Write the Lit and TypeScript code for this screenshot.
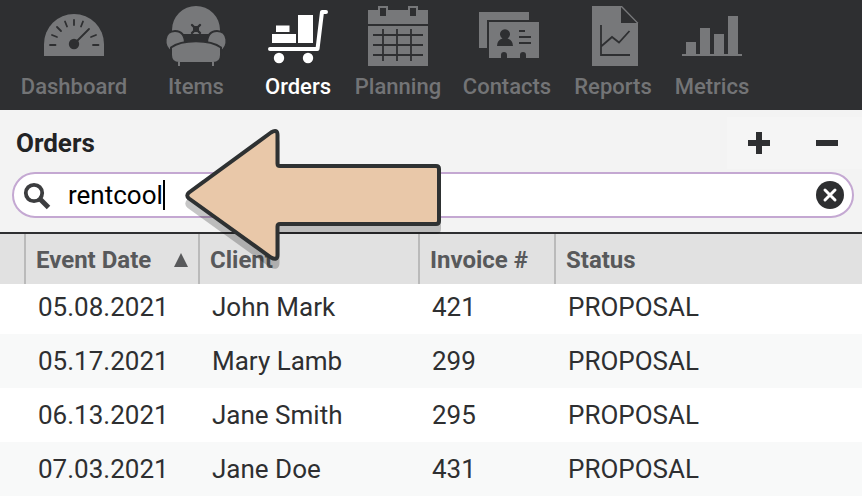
import { LitElement, html, css, svg } from "lit";
import { customElement, property, state } from "lit/decorators.js";
import { classMap } from "lit/directives/class-map.js";

const DARK = "#2e2f31";

const icons: Record<string, unknown> = {
  Dashboard: svg`
    <path fill="currentColor" d="M0 50V38a30 30 0 0 1 60 0v12z"/>
    <circle cx="30" cy="38" r="5.2" fill="${DARK}"/>
    <path fill="none" stroke="${DARK}" stroke-width="1.8" stroke-linecap="round"
      d="M30 38L45 23M6 39h5.500M49 39h5.500M8 29l5 2M13 21l4 4M21 15.500l2 5M30 14v5M39 15.500l-2 5M52 29l-5 2"/>`,
  Items: svg`
    <path fill="currentColor" d="M6 24a24 24 0 0 1 48 0v4H6z"/>
    <path fill="none" stroke="${DARK}" stroke-width="2.400" stroke-linecap="round" d="M26 19l8 8M34 19l-8 8"/>
    <rect x="27" y="20" width="6" height="6" rx="1" fill="${DARK}"/>
    <path fill="currentColor" stroke="${DARK}" stroke-width="2" d="M6 46C-4 40-2 25 9 25c7 0 10 5 10 13v8z"/>
    <path fill="currentColor" stroke="${DARK}" stroke-width="2" d="M54 46c10-6 8-21-3-21-7 0-10 5-10 13v8z"/>
    <path fill="currentColor" stroke="${DARK}" stroke-width="2" d="M5 41.500C16 33 44 33 55 41.500V49q0 8-8 8H13q-8 0-8-8z"/>
    <path fill="currentColor" d="M12 56h2v4h-2zM46 56h2v4h-2z"/>`,
  Orders: svg`
    <path fill="none" stroke="currentColor" stroke-width="4" stroke-linecap="round" stroke-linejoin="round" d="M2 43h47.500L54 6h4"/>
    <path fill="currentColor" d="M4 28h24v9H4zM8 19.500h13.500v6.500H8zM30 9h15v28H30z"/>
    <circle cx="11" cy="52" r="5.200" fill="currentColor"/>
    <circle cx="40" cy="52" r="5.200" fill="currentColor"/>`,
  Planning: svg`
    <path fill="currentColor" d="M0 4h10V0h10v4h20V0h10v4h10v14H0zM0 20h60v40H0z"/>
    <path fill="${DARK}" d="M12 2h6v8h-6zM42 2h6v8h-6z"/>
    <path fill="none" stroke="${DARK}" stroke-width="1.800" d="M5 29h50M5 39h50M5 49h50M15 23v32M29 23v32M43 23v32"/>`,
  Contacts: svg`
    <path fill="currentColor" d="M2 6h50v8H10v28H2z"/>
    <path fill="currentColor" d="M12 16h50v36H49v-3a3 3 0 0 0-6 0v3H30v-3a3 3 0 0 0-6 0v3H12z"/>
    <path fill="${DARK}" d="M20 40q0-6 5.500-7.500a5 5 0 1 1 5 0Q36 34 36 40z"/>
    <path fill="none" stroke="${DARK}" stroke-width="2" d="M42 25h6M42 31h12M42 37h12"/>`,
  Reports: svg`
    <path fill="currentColor" d="M9 0h30l16 16.500V60H9z"/>
    <path fill="${DARK}" d="M38 1v16h16z"/>
    <path fill="none" stroke="currentColor" stroke-width="1" d="M38.500 .5L54.500 17"/>
    <path fill="none" stroke="${DARK}" stroke-width="1.800" d="M18 19v30h29M18 40.500L29 31l7 5.500L46.500 25"/>`,
  Metrics: svg`
    <path fill="currentColor" d="M0 48h60v2H0zM4 36h10v13H4zM18 22h10v27H18zM32 28h10v21H32zM46 10h10v39H46z"/>`,
};

@customElement("nav-item")
class NavItem extends LitElement {
  @property() label = "";
  @property({ type: Boolean }) active = false;

  static styles = css`
    :host { display: block; }
    .item {
      display: flex;
      flex-direction: column;
      align-items: center;
      gap: 8px;
      color: #737476;
      text-decoration: none;
      font: 500 22px/26px Roboto, "Liberation Sans", sans-serif;
      white-space: nowrap;
    }
    .icon { display: block; width: 60px; height: 60px; overflow: visible; color: #77787a; }
    .active, .active .icon { color: #fff; }
  `;

  render() {
    return html`<a href="#" class=${classMap({ item: true, active: this.active })}
      aria-current=${this.active ? "page" : "false"}>
      <svg class="icon" viewBox="0 0 60 60" aria-hidden="true">${icons[this.label]}</svg>
      <span>${this.label}</span>
    </a>`;
  }
}

const orders = [
  ["05.08.2021", "John Mark", "421", "PROPOSAL"],
  ["05.17.2021", "Mary Lamb", "299", "PROPOSAL"],
  ["06.13.2021", "Jane Smith", "295", "PROPOSAL"],
  ["07.03.2021", "Jane Doe", "431", "PROPOSAL"],
];

@customElement("app-root")
class AppRoot extends LitElement {
  @state() private query = "rentcool";

  static styles = css`
    :host {
      display: block;
      position: relative;
      background: #fff;
      color: #2e2f31;
      font-family: Roboto, "Liberation Sans", sans-serif;
    }
    .nav {
      display: grid;
      grid-template-columns: 130px 114px 90px 110px 108px 104px 94px;
      padding: 6px 9px 10px;
      background: #2e2f31;
    }
    .panel { background: #f3f3f3; border-bottom: 2px solid #2e2f31; padding: 7px 8px 14px 12px; }
    .head { display: flex; align-items: center; justify-content: space-between; padding-left: 4px; margin-bottom: 3px; }
    .title { margin: 0; font-size: 26px; line-height: 32px; font-weight: 700; color: #222325; }
    .actions { display: flex; gap: 16px; padding-left: 6px; margin-right: -8px; padding-right: 9px; background: #f5f5f5; }
    .icon-button {
      display: grid;
      place-items: center;
      width: 52px;
      height: 52px;
      padding: 0;
      border: 0;
      background: none;
      color: #2e2f31;
    }
    .search {
      display: flex;
      align-items: center;
      height: 46px;
      box-sizing: border-box;
      padding: 0 8px 0 8px;
      border: 2px solid #c4a8d2;
      border-radius: 23px;
      background: #fff;
    }
    .field { display: flex; align-items: center; flex: 1; cursor: text; }
    .lens { display: block; width: 32px; height: 32px; margin-right: 14px; }
    .query {
      field-sizing: content;
      min-width: 2px;
      padding: 0;
      border: 0;
      outline: 0;
      background: none;
      color: #000;
      font: 400 26px/32px Roboto, "Liberation Sans", sans-serif;
    }
    .caret { width: 2px; height: 30px; background: #000; }
    .clear { display: block; padding: 0; border: 0; background: none; color: #2e2f31; }
    .clear-icon { display: block; width: 28px; height: 28px; }
    .orders { width: 100%; border-collapse: separate; border-spacing: 0; table-layout: fixed; text-align: left; }
    .c-mark { width: 24px; }
    .c-date { width: 174px; }
    .c-client { width: 220px; }
    .c-invoice { width: 136px; }
    .orders th {
      height: 48px;
      padding: 2px 10px 0;
      border-left: 2px solid #bababa;
      background: #e1e1e1;
      color: #58595b;
      font-size: 24px;
      line-height: 28px;
      font-weight: 700;
    }
    .orders .mark { border-left: 0; padding: 0; }
    .sortable { display: flex; align-items: center; justify-content: space-between; }
    .sort-icon { display: block; width: 14px; height: 14px; }
    .orders td { height: 54px; padding: 0 0 0 14px; font-size: 26px; line-height: 32px; white-space: nowrap; }
    .orders tbody tr:nth-child(even) { background: #f8f9f9; }
    .orders tbody tr:first-child td { height: 46px; padding-bottom: 4px; }
    .pointer { position: absolute; left: 180px; top: 124px; width: 264px; height: 148px; pointer-events: none; }
  `;

  render() {
    const arrow = "M9 68.500L91 8.500Q97.500 4.500 97.500 11V39.500Q97.500 42 100 42H256Q259 42 259 45V97Q259 100 256 100H100Q97.500 100 97.500 102.500V131Q97.500 137 91 133.500L9 74.500Q5.500 71.500 9 68.500Z";
    return html`
      <nav class="nav">
        ${Object.keys(icons).map((n) => html`<nav-item label=${n} ?active=${n === "Orders"}></nav-item>`)}
      </nav>
      <section class="panel">
        <div class="head">
          <h1 class="title">Orders</h1>
          <div class="actions">
            <button class="icon-button" aria-label="Add order">
              <svg width="22" height="22" viewBox="0 0 22 22"><path fill="currentColor" d="M8 0h6v8h8v6h-8v8H8v-8H0V8h8z"/></svg>
            </button>
            <button class="icon-button" aria-label="Remove order">
              <svg width="22" height="22" viewBox="0 0 22 22"><path fill="currentColor" d="M0 8h22v6H0z"/></svg>
            </button>
          </div>
        </div>
        <div class="search">
          <label class="field">
            <svg class="lens" viewBox="0 0 32 32" aria-hidden="true">
              <g fill="none" stroke="#3c3d3f"><circle cx="12" cy="14" r="8.200" stroke-width="3.800"/>
              <path stroke-width="5" d="M18 20l8.500 8.500"/></g>
            </svg>
            <input class="query" type="text" aria-label="Search orders" .value=${this.query}
              @input=${(e: Event) => (this.query = (e.target as HTMLInputElement).value)} />
            <span class="caret"></span>
          </label>
          <button class="clear" aria-label="Clear search" @click=${() => (this.query = "")}>
            <svg class="clear-icon" viewBox="0 0 28 28"><circle cx="14" cy="14" r="14" fill="currentColor"/>
            <path fill="none" stroke="#fff" stroke-width="3" stroke-linecap="round" d="M9 9l10 10M19 9L9 19"/></svg>
          </button>
        </div>
      </section>
      <table class="orders">
        <colgroup><col class="c-mark" /><col class="c-date" /><col class="c-client" /><col class="c-invoice" /><col /></colgroup>
        <thead>
          <tr>
            <th class="mark"></th>
            <th scope="col" aria-sort="ascending"><div class="sortable">Event Date
              <svg class="sort-icon" viewBox="0 0 14 14" aria-hidden="true"><path fill="currentColor" d="M7 0l7 14H0z"/></svg></div></th>
            <th scope="col">Client</th>
            <th scope="col">Invoice #</th>
            <th scope="col">Status</th>
          </tr>
        </thead>
        <tbody>
          ${orders.map((row) => html`<tr><td></td>${row.map((cell) => html`<td>${cell}</td>`)}</tr>`)}
        </tbody>
      </table>
      <svg class="pointer" viewBox="0 0 264 148" aria-hidden="true">
        <path d=${arrow} transform="translate(0 8)" fill="#000" stroke="#000" stroke-width="4" opacity=".22"/>
        <path d=${arrow} fill="#e9c8a9" stroke="#2e3132" stroke-width="4" stroke-linejoin="round"/>
      </svg>
    `;
  }
}
